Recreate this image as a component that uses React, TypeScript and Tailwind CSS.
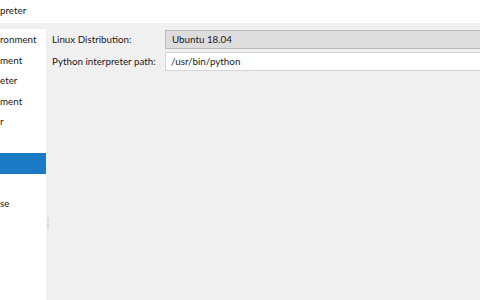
import React from 'react';

const navItems = [
  { label: 'ronment', selected: false },
  { label: 'ment', selected: false },
  { label: 'eter', selected: false },
  { label: 'ment', selected: false },
  { label: 'r', selected: false },
  { label: '', selected: false },
  { label: '', selected: true },
  { label: '', selected: false },
  { label: 'se', selected: false },
];

const App = () => {
  return (
    <div
      className="w-[480px] h-[300px] flex flex-col bg-[#f0f0f0] text-[9.8px] text-[#1a1a1a] overflow-hidden"
      style={{ fontFamily: 'Lato, "Noto Sans", sans-serif' }}
    >
      <div className="h-[23px] shrink-0 bg-white flex items-center leading-none">
        <span className="pb-[1px]">preter</span>
      </div>

      <div className="flex flex-1 pt-[6px]">
        {/* sidebar tree */}
        <div className="w-[46px] shrink-0 bg-white flex flex-col pt-[1px]">
          {navItems.map((item, i) => (
            <div
              key={i}
              className={`h-[20.5px] flex items-center whitespace-nowrap overflow-hidden leading-none ${
                item.selected ? 'bg-[#1a7bc4] text-white' : ''
              }`}
            >
              <span>{item.label}</span>
            </div>
          ))}
        </div>

        {/* splitter */}
        <div className="w-[3px] shrink-0 flex flex-col items-center justify-center gap-[1px] pt-[117px]">
          {[0, 1, 2, 3].map((d) => (
            <div key={d} className="w-[2px] h-[2px] bg-[#dadada]" />
          ))}
        </div>

        {/* form */}
        <div className="flex-1 flex flex-col gap-[3px] pl-[3px]">
          <div className="flex items-center h-[19px] mt-[1px]">
            <span className="w-[113px] shrink-0 leading-none whitespace-nowrap">Linux Distribution:</span>
            <div className="flex-1 h-[19px] bg-[#dddddd] border border-[#b9b9b9] border-r-0 flex items-center pl-[6px] leading-none">
              Ubuntu 18.04
            </div>
          </div>
          <div className="flex items-center h-[19px]">
            <span className="w-[113px] shrink-0 leading-none whitespace-nowrap">Python interpreter path:</span>
            <div className="flex-1 h-[19px] bg-white border border-[#d4d4d4] border-r-0 flex items-center pl-[5px] leading-none">
              /usr/bin/python
            </div>
          </div>
        </div>
      </div>
    </div>
  );
};

export default App;
